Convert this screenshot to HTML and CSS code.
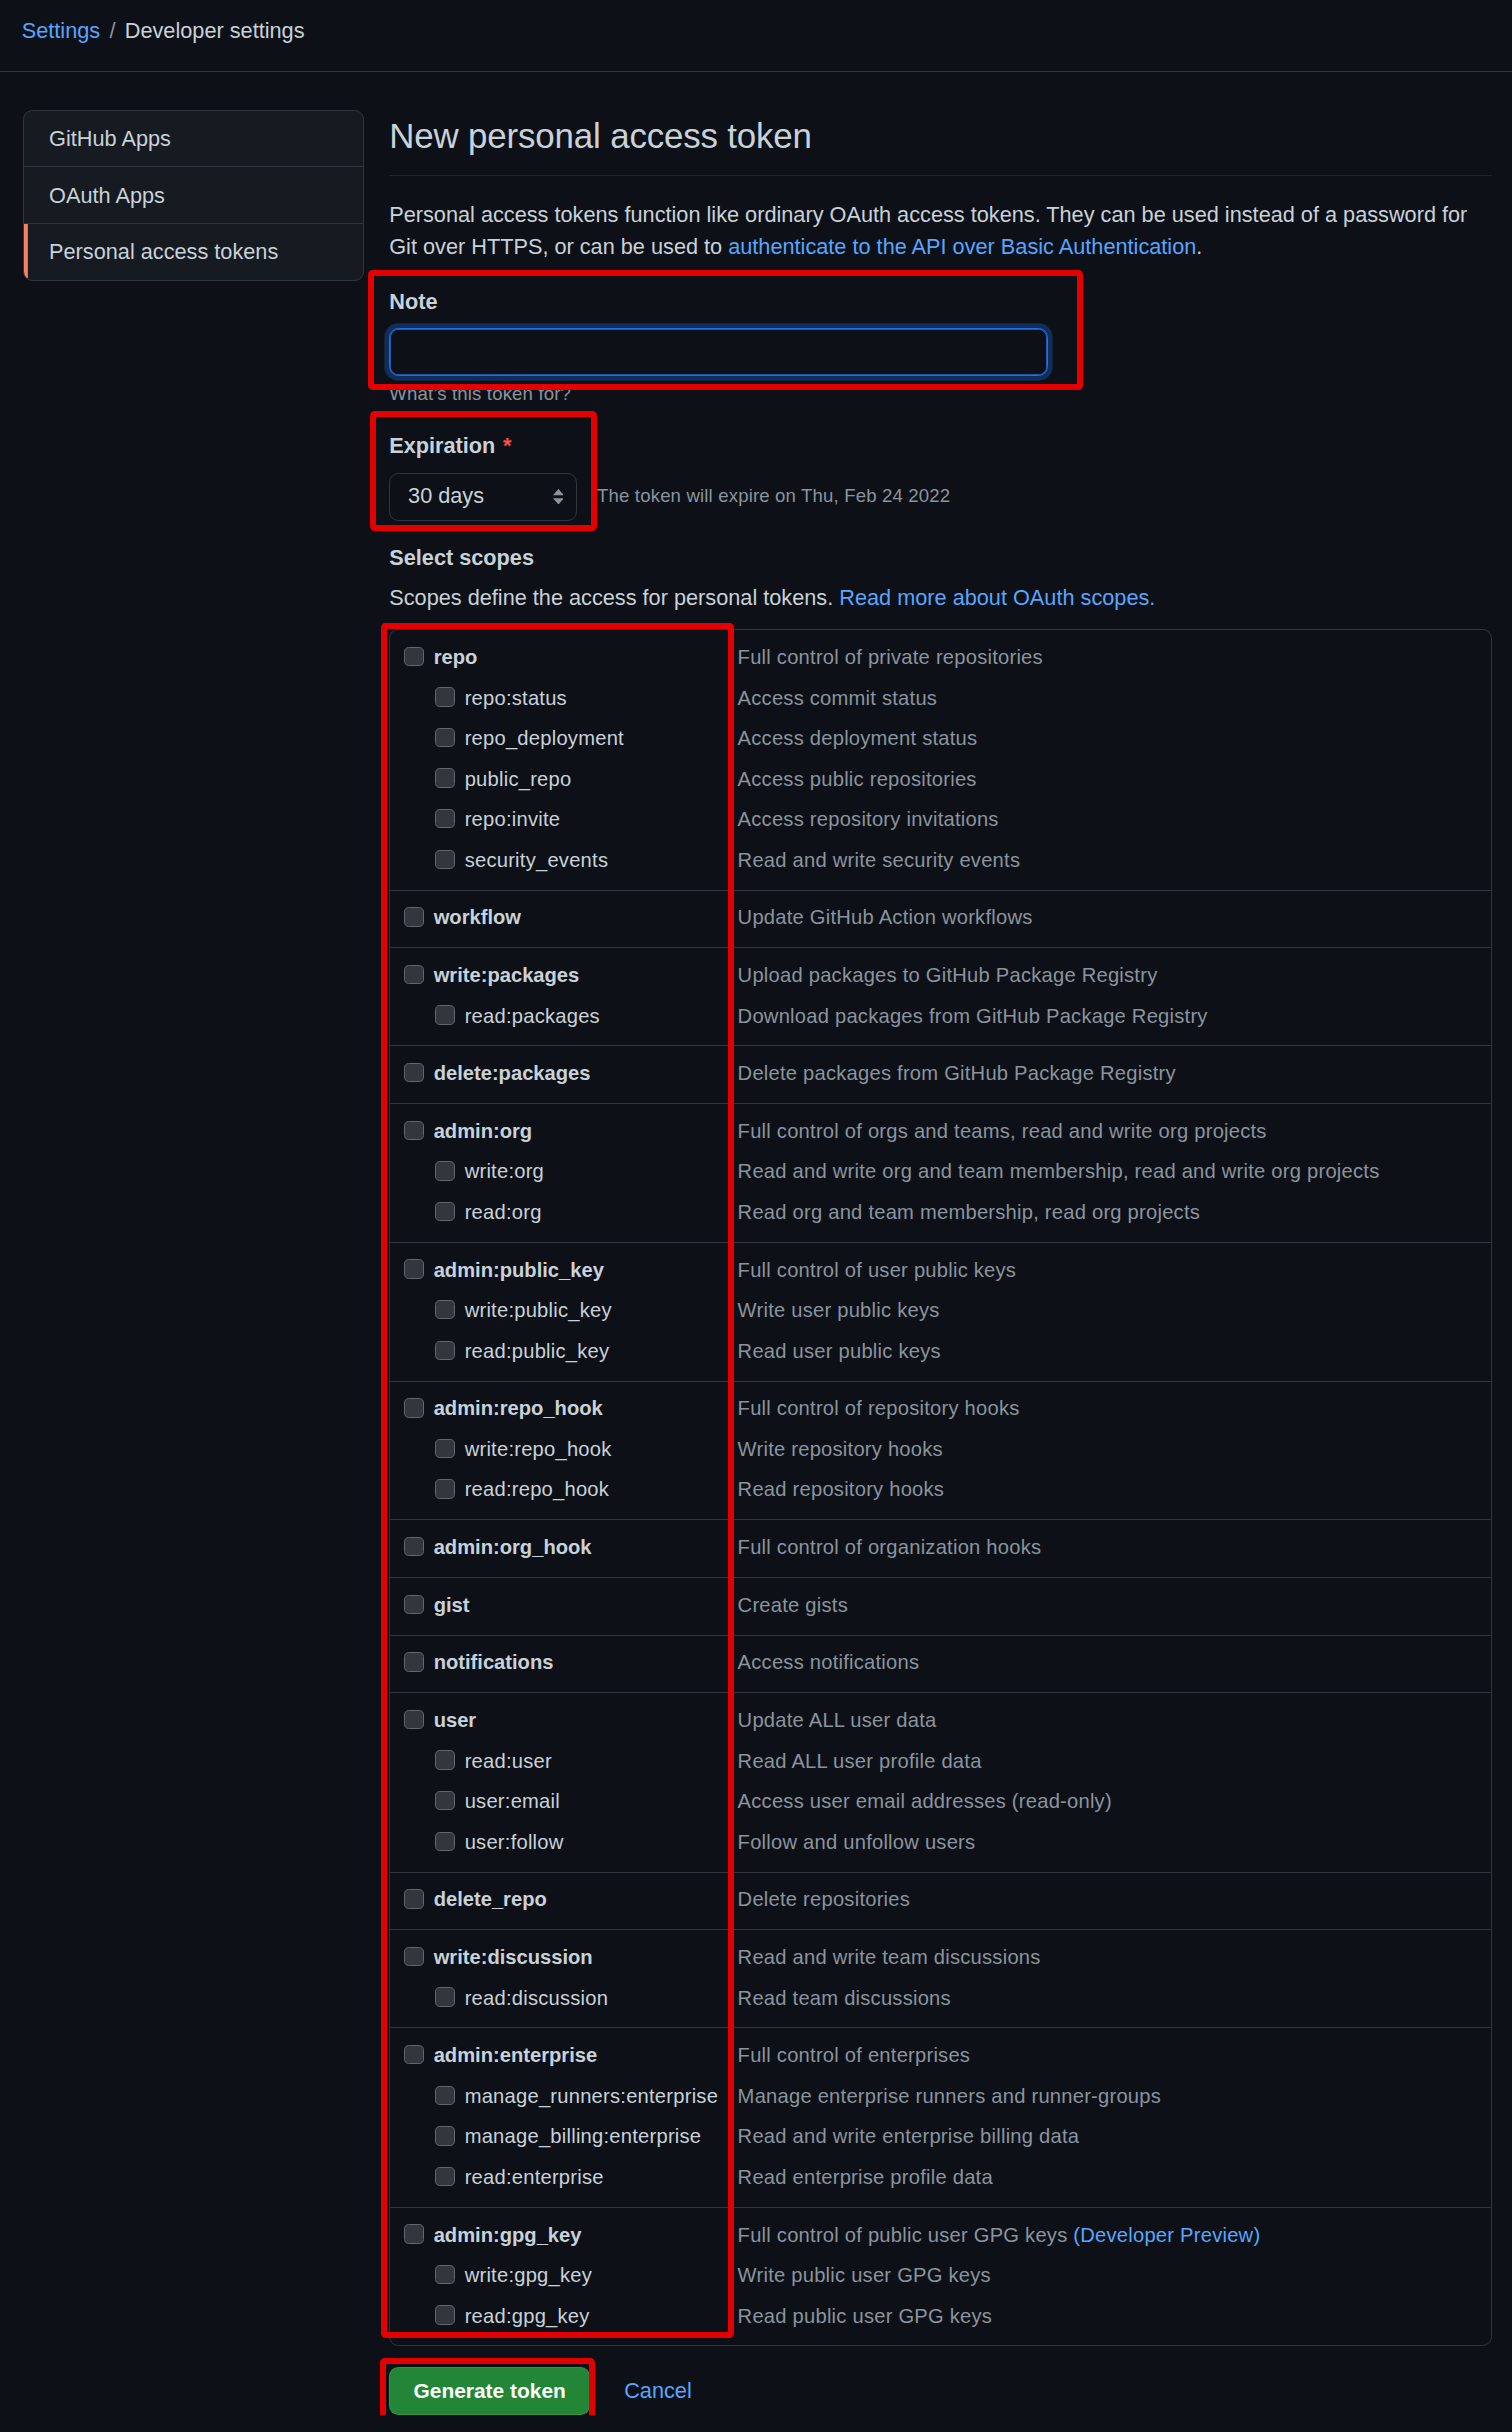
FILE: index.html
```html
<!DOCTYPE html>
<html lang="en">
<head>
<meta charset="utf-8">
<title>New personal access token</title>
<link rel="stylesheet" href="styles.css">
</head>
<body>
<header class="crumbs">
  <a href="#">Settings</a><span class="sep">/</span><span class="crumb-current">Developer settings</span>
</header>

<div class="layout">
  <nav class="menu">
    <a class="menu-item" href="#">GitHub Apps</a>
    <a class="menu-item" href="#">OAuth Apps</a>
    <a class="menu-item selected" href="#">Personal access tokens</a>
  </nav>

  <main class="content">
    <div class="subhead"><h2>New personal access token</h2></div>
    <p class="intro"><span>Personal access tokens function like ordinary OAuth access tokens. They can be used instead of a password for</span><br><span>Git over HTTPS, or can be used to </span><a href="#">authenticate to the API over Basic Authentication</a><span>.</span></p>

    <form class="token-form">
      <div class="field note-field">
        <label class="field-label" for="note">Note</label>
        <input class="text-input" id="note" type="text">
        <p class="hint">What’s this token for?</p>
        <span class="mark mark-note"></span>
      </div>

      <div class="field exp-field">
        <span class="field-label">Expiration <span class="req">*</span></span>
        <div class="exp-row">
          <div class="select"><span>30 days</span>
            <svg class="select-arrows" width="7" height="10" viewBox="0 0 7 10"><path d="M3.5 0L7 4H0Z M3.5 10L0 6H7Z" fill="#8b949e"/></svg>
          </div>
          <span class="exp-note">The token will expire on Thu, Feb 24 2022</span>
        </div>
        <span class="mark mark-exp"></span>
      </div>

      <div class="scopes-title">Select scopes</div>
      <p class="scopes-help"><span>Scopes define the access for personal tokens. </span><a href="#">Read more about OAuth scopes.</a></p>

      <div class="scopes">
        <div class="group">
          <div class="row top"><label class="name"><input type="checkbox">repo</label><span class="desc">Full control of private repositories</span></div>
          <div class="row sub"><label class="name"><input type="checkbox">repo:status</label><span class="desc">Access commit status</span></div>
          <div class="row sub"><label class="name"><input type="checkbox">repo_deployment</label><span class="desc">Access deployment status</span></div>
          <div class="row sub"><label class="name"><input type="checkbox">public_repo</label><span class="desc">Access public repositories</span></div>
          <div class="row sub"><label class="name"><input type="checkbox">repo:invite</label><span class="desc">Access repository invitations</span></div>
          <div class="row sub"><label class="name"><input type="checkbox">security_events</label><span class="desc">Read and write security events</span></div>
        </div>
        <div class="group">
          <div class="row top"><label class="name"><input type="checkbox">workflow</label><span class="desc">Update GitHub Action workflows</span></div>
        </div>
        <div class="group">
          <div class="row top"><label class="name"><input type="checkbox">write:packages</label><span class="desc">Upload packages to GitHub Package Registry</span></div>
          <div class="row sub"><label class="name"><input type="checkbox">read:packages</label><span class="desc">Download packages from GitHub Package Registry</span></div>
        </div>
        <div class="group">
          <div class="row top"><label class="name"><input type="checkbox">delete:packages</label><span class="desc">Delete packages from GitHub Package Registry</span></div>
        </div>
        <div class="group">
          <div class="row top"><label class="name"><input type="checkbox">admin:org</label><span class="desc">Full control of orgs and teams, read and write org projects</span></div>
          <div class="row sub"><label class="name"><input type="checkbox">write:org</label><span class="desc">Read and write org and team membership, read and write org projects</span></div>
          <div class="row sub"><label class="name"><input type="checkbox">read:org</label><span class="desc">Read org and team membership, read org projects</span></div>
        </div>
        <div class="group">
          <div class="row top"><label class="name"><input type="checkbox">admin:public_key</label><span class="desc">Full control of user public keys</span></div>
          <div class="row sub"><label class="name"><input type="checkbox">write:public_key</label><span class="desc">Write user public keys</span></div>
          <div class="row sub"><label class="name"><input type="checkbox">read:public_key</label><span class="desc">Read user public keys</span></div>
        </div>
        <div class="group">
          <div class="row top"><label class="name"><input type="checkbox">admin:repo_hook</label><span class="desc">Full control of repository hooks</span></div>
          <div class="row sub"><label class="name"><input type="checkbox">write:repo_hook</label><span class="desc">Write repository hooks</span></div>
          <div class="row sub"><label class="name"><input type="checkbox">read:repo_hook</label><span class="desc">Read repository hooks</span></div>
        </div>
        <div class="group">
          <div class="row top"><label class="name"><input type="checkbox">admin:org_hook</label><span class="desc">Full control of organization hooks</span></div>
        </div>
        <div class="group">
          <div class="row top"><label class="name"><input type="checkbox">gist</label><span class="desc">Create gists</span></div>
        </div>
        <div class="group">
          <div class="row top"><label class="name"><input type="checkbox">notifications</label><span class="desc">Access notifications</span></div>
        </div>
        <div class="group">
          <div class="row top"><label class="name"><input type="checkbox">user</label><span class="desc">Update ALL user data</span></div>
          <div class="row sub"><label class="name"><input type="checkbox">read:user</label><span class="desc">Read ALL user profile data</span></div>
          <div class="row sub"><label class="name"><input type="checkbox">user:email</label><span class="desc">Access user email addresses (read-only)</span></div>
          <div class="row sub"><label class="name"><input type="checkbox">user:follow</label><span class="desc">Follow and unfollow users</span></div>
        </div>
        <div class="group">
          <div class="row top"><label class="name"><input type="checkbox">delete_repo</label><span class="desc">Delete repositories</span></div>
        </div>
        <div class="group">
          <div class="row top"><label class="name"><input type="checkbox">write:discussion</label><span class="desc">Read and write team discussions</span></div>
          <div class="row sub"><label class="name"><input type="checkbox">read:discussion</label><span class="desc">Read team discussions</span></div>
        </div>
        <div class="group">
          <div class="row top"><label class="name"><input type="checkbox">admin:enterprise</label><span class="desc">Full control of enterprises</span></div>
          <div class="row sub"><label class="name"><input type="checkbox">manage_runners:enterprise</label><span class="desc">Manage enterprise runners and runner-groups</span></div>
          <div class="row sub"><label class="name"><input type="checkbox">manage_billing:enterprise</label><span class="desc">Read and write enterprise billing data</span></div>
          <div class="row sub"><label class="name"><input type="checkbox">read:enterprise</label><span class="desc">Read enterprise profile data</span></div>
        </div>
        <div class="group">
          <div class="row top"><label class="name"><input type="checkbox">admin:gpg_key</label><span class="desc"><span>Full control of public user GPG keys </span><a href="#">(Developer Preview)</a></span></div>
          <div class="row sub"><label class="name"><input type="checkbox">write:gpg_key</label><span class="desc">Write public user GPG keys</span></div>
          <div class="row sub"><label class="name"><input type="checkbox">read:gpg_key</label><span class="desc">Read public user GPG keys</span></div>
        </div>
        <span class="mark mark-scopes"></span>
      </div>

      <div class="actions">
        <button class="btn-primary" type="button">Generate token</button>
        <a class="cancel" href="#">Cancel</a>
        <span class="mark mark-btn"></span>
      </div>
    </form>
  </main>
</div>
</body>
</html>
```

FILE: styles.css
```css
html {
  background: #0d1117;
}

body {
  margin: 0;
  zoom: 1.5508;
  background: #0d1117;
  color: #c9d1d9;
  font-family: "Liberation Sans", Arial, sans-serif;
  font-size: 14px;
  line-height: 21px;
}

a {
  color: #58a6ff;
  text-decoration: none;
}

/* breadcrumb header */
.crumbs {
  height: 36.5px;
  padding: 9.5px 14px 0;
  border-bottom: 1px solid #30363d;
  font-size: 14px;
  line-height: 21px;
}

.crumbs .sep {
  color: #8b949e;
  margin: 0 6px;
}

.crumb-current {
  color: #c9d1d9;
}

/* page layout */
.layout {
  display: flex;
  align-items: flex-start;
  gap: 16px;
  padding: 24px 13px 0 15px;
}

.menu {
  flex: none;
  width: 220px;
  box-sizing: border-box;
  border: 1px solid #30363d;
  border-radius: 6px;
  background: #161b22;
  overflow: hidden;
}

.menu-item {
  display: block;
  padding: 8.5px 16px;
  line-height: 19px;
  color: #c9d1d9;
  border-top: 1px solid #30363d;
}

.menu-item:first-child {
  border-top: 0;
}

.menu-item.selected {
  box-shadow: inset 2.5px 0 0 #f78166;
}

.content {
  flex: 1;
  min-width: 0;
}

.subhead {
  padding-bottom: 8px;
  border-bottom: 1px solid #21262d;
}

.subhead h2 {
  margin: 0;
  font-size: 22.5px;
  font-weight: 400;
  line-height: 34px;
  letter-spacing: -0.1px;
  color: #c9d1d9;
}

.intro {
  margin: 15px 0 0;
}

/* form fields */
.field {
  position: relative;
}

.field-label {
  display: block;
  font-weight: 700;
  line-height: 21px;
}

.note-field {
  margin-top: 14px;
}

.text-input {
  display: block;
  box-sizing: border-box;
  width: 425px;
  height: 31px;
  margin-top: 6px;
  padding: 5px 12px;
  background: #0d1117;
  border: 1px solid #1f6feb;
  border-radius: 6px;
  box-shadow: inset 0 0 0 0.5px #1f6feb, 0 0 0 3px rgba(31, 111, 235, 0.3);
  color: #c9d1d9;
  font: inherit;
  outline: none;
}

.hint {
  margin: 3px 0 0;
  font-size: 12px;
  line-height: 18px;
  color: #8b949e;
  letter-spacing: 0.1px;
}

.exp-field {
  margin-top: 14px;
}

.req {
  color: #f85149;
  margin-left: 1px;
}

.exp-row {
  display: flex;
  align-items: center;
  margin-top: 6.5px;
}

.select {
  flex: none;
  width: 121px;
  height: 31px;
  box-sizing: border-box;
  display: flex;
  align-items: center;
  justify-content: space-between;
  padding: 0 8px 0 11.5px;
  border: 1px solid #30363d;
  border-radius: 6px;
  background: #0d1117;
  color: #c9d1d9;
}

.select-arrows {
  display: block;
}

.exp-note {
  margin-left: 13px;
  font-size: 12px;
  color: #8b949e;
  letter-spacing: 0.1px;
}

.scopes-title {
  margin-top: 13.5px;
  font-weight: 700;
  line-height: 21px;
}

.scopes-help {
  margin: 5px 0 0;
}

/* scopes table */
.scopes {
  position: relative;
  margin-top: 9.5px;
  border: 1px solid #30363d;
  border-radius: 6px;
}

.group {
  padding: 4.4px 0 6px;
  border-top: 1px solid #30363d;
}

.group:first-child {
  border-top: 0;
}

.row {
  display: flex;
  align-items: center;
  height: 26.15px;
  font-size: 13px;
  letter-spacing: 0.15px;
}

.name {
  flex: none;
  width: 224px;
  box-sizing: border-box;
  display: flex;
  align-items: center;
  padding-left: 9px;
  color: #c9d1d9;
  white-space: nowrap;
}

.row.top .name {
  font-weight: 700;
  letter-spacing: 0;
}

.row.sub .name {
  padding-left: 29px;
}

.name input {
  -webkit-appearance: none;
  appearance: none;
  flex: none;
  width: 12.5px;
  height: 12.5px;
  margin: -1px 6.5px 0 0;
  border: 1px solid #62676f;
  border-radius: 3px;
  background: #33363c;
}

.desc {
  color: #8b949e;
  white-space: nowrap;
}

/* actions */
.actions {
  position: relative;
  display: flex;
  align-items: center;
  gap: 22px;
  margin-top: 13.5px;
}

.btn-primary {
  height: 31px;
  box-sizing: border-box;
  padding: 0 15px;
  background: #238636;
  border: 1px solid rgba(240, 246, 252, 0.1);
  border-radius: 6px;
  color: #ffffff;
  font-family: inherit;
  font-size: 13.5px;
  font-weight: 700;
}

.cancel {
  font-size: 14px;
}

/* red annotation boxes laid over the form */
.mark {
  position: absolute;
  box-sizing: border-box;
  border: 4.5px solid #e40000;
  border-radius: 3px;
  pointer-events: none;
  z-index: 2;
}

.mark-note {
  left: -14px;
  top: -10px;
  width: 461.5px;
  height: 77.5px;
}

.mark-exp {
  left: -12.4px;
  top: -12px;
  width: 146.4px;
  height: 77px;
}

.mark-scopes {
  left: -6px;
  top: -4.5px;
  width: 227.5px;
  height: 1106px;
}

.mark-btn {
  left: -6px;
  top: -6px;
  width: 139px;
  height: 42px;
}
```
